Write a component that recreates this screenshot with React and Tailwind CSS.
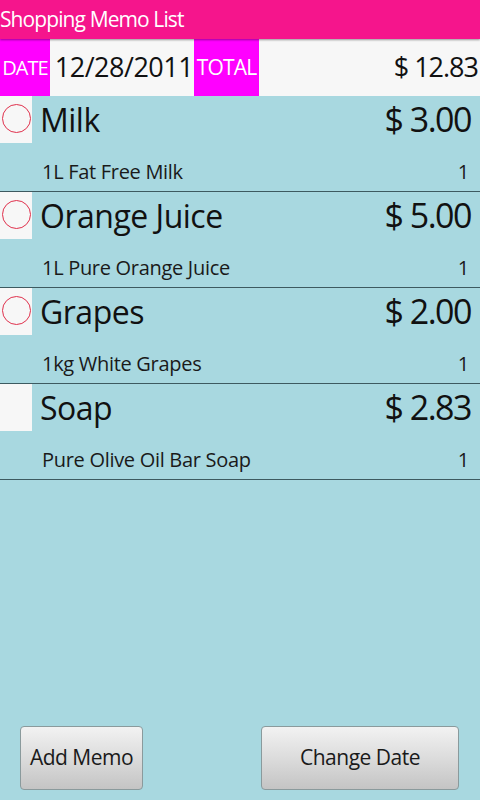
import React from "react";

const items = [
  { name: "Milk", price: "$ 3.00", desc: "1L Fat Free Milk", qty: 1, done: false },
  { name: "Orange Juice", price: "$ 5.00", desc: "1L Pure Orange Juice", qty: 1, done: false },
  { name: "Grapes", price: "$ 2.00", desc: "1kg White Grapes", qty: 1, done: false },
  { name: "Soap", price: "$ 2.83", desc: "Pure Olive Oil Bar Soap", qty: 1, done: true },
];

function MemoRow({ item }) {
  return (
    <div className="h-[96px] border-b border-[#3d5a60] flex flex-col">
      <div className="flex items-start">
        <div className="w-[32px] h-[47px] bg-[#f7f7f7] flex items-center justify-center shrink-0">
          {!item.done && (
            <div className="w-[29px] h-[29px] rounded-full border-[1.5px] border-[#e0304c] -mt-[2px]" />
          )}
        </div>
        <span className="ml-[8px] text-[32px] leading-[47px] tracking-[-0.5px] text-[#111]">{item.name}</span>
        <span className="ml-auto mr-[9px] text-[34px] leading-[47px] tracking-[-1.5px] text-[#111]">{item.price}</span>
      </div>
      <div className="flex items-center mt-[15px] pl-[42px] pr-[11px] text-[20px] leading-[28px] tracking-[-0.3px] text-[#1a1a1a]">
        <span>{item.desc}</span>
        <span className="ml-auto">{item.qty}</span>
      </div>
    </div>
  );
}

export default function App() {
  return (
    <div
      className="w-[480px] h-[800px] bg-[#a8d8e0] flex flex-col overflow-hidden"
      style={{ fontFamily: '"Open Sans", "DejaVu Sans", sans-serif' }}
    >
      {/* title bar */}
      <div className="h-[39px] bg-[#f5158c] text-white text-[21px] font-medium leading-[38px] tracking-[-0.9px] shadow-[0_1px_2px_rgba(0,0,0,0.4)] z-10">
        Shopping Memo List
      </div>

      {/* date / total */}
      <div className="h-[57px] flex bg-[#f7f7f7]">
        <div className="w-[50px] bg-[#ff00ff] text-white text-[20px] flex items-center justify-center tracking-[-1px]">
          DATE
        </div>
        <div className="w-[144px] text-[27px] flex items-center justify-center pl-[4px] tracking-[-0.5px] text-[#111]">
          12/28/2011
        </div>
        <div className="w-[65px] bg-[#ff00ff] text-white text-[21px] flex items-center justify-center tracking-[-0.8px]">
          TOTAL
        </div>
        <div className="flex-1 text-[27px] flex items-center justify-end pr-[2px] tracking-[-1px] text-[#111]">
          $ 12.83
        </div>
      </div>

      {/* memo list */}
      <div className="flex flex-col">
        {items.map((it) => (
          <MemoRow key={it.name} item={it} />
        ))}
      </div>

      {/* buttons */}
      <div className="mt-auto mb-[10px] flex justify-between px-[20px] pr-[21px]">
        <button className="w-[123px] h-[64px] rounded-[4px] border border-[#8a9a9c] bg-gradient-to-b from-[#f2f2f2] via-[#dcdcdc] to-[#c4c4c4] text-[21px] text-[#1a1a1a] tracking-[-0.5px]">
          Add Memo
        </button>
        <button className="w-[198px] h-[64px] rounded-[4px] border border-[#8a9a9c] bg-gradient-to-b from-[#f2f2f2] via-[#dcdcdc] to-[#c4c4c4] text-[21px] text-[#1a1a1a] tracking-[-0.5px]">
          Change Date
        </button>
      </div>
    </div>
  );
}
